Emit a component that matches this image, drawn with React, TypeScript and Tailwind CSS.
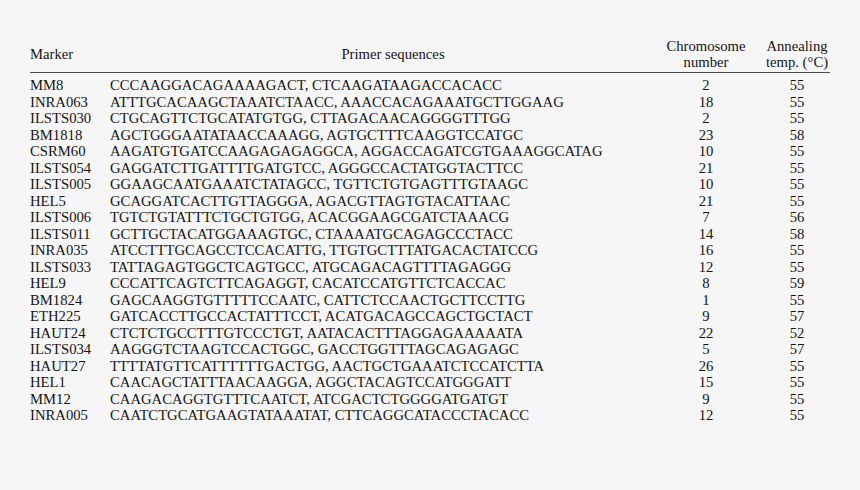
import React from 'react';

interface PrimerRow {
  marker: string;
  primers: string;
  chromosome: number;
  temp: number;
}

const rows: PrimerRow[] = [
  { marker: 'MM8', primers: 'CCCAAGGACAGAAAAGACT, CTCAAGATAAGACCACACC', chromosome: 2, temp: 55 },
  { marker: 'INRA063', primers: 'ATTTGCACAAGCTAAATCTAACC, AAACCACAGAAATGCTTGGAAG', chromosome: 18, temp: 55 },
  { marker: 'ILSTS030', primers: 'CTGCAGTTCTGCATATGTGG, CTTAGACAACAGGGGTTTGG', chromosome: 2, temp: 55 },
  { marker: 'BM1818', primers: 'AGCTGGGAATATAACCAAAGG, AGTGCTTTCAAGGTCCATGC', chromosome: 23, temp: 58 },
  { marker: 'CSRM60', primers: 'AAGATGTGATCCAAGAGAGAGGCA, AGGACCAGATCGTGAAAGGCATAG', chromosome: 10, temp: 55 },
  { marker: 'ILSTS054', primers: 'GAGGATCTTGATTTTGATGTCC, AGGGCCACTATGGTACTTCC', chromosome: 21, temp: 55 },
  { marker: 'ILSTS005', primers: 'GGAAGCAATGAAATCTATAGCC, TGTTCTGTGAGTTTGTAAGC', chromosome: 10, temp: 55 },
  { marker: 'HEL5', primers: 'GCAGGATCACTTGTTAGGGA, AGACGTTAGTGTACATTAAC', chromosome: 21, temp: 55 },
  { marker: 'ILSTS006', primers: 'TGTCTGTATTTCTGCTGTGG, ACACGGAAGCGATCTAAACG', chromosome: 7, temp: 56 },
  { marker: 'ILSTS011', primers: 'GCTTGCTACATGGAAAGTGC, CTAAAATGCAGAGCCCTACC', chromosome: 14, temp: 58 },
  { marker: 'INRA035', primers: 'ATCCTTTGCAGCCTCCACATTG, TTGTGCTTTATGACACTATCCG', chromosome: 16, temp: 55 },
  { marker: 'ILSTS033', primers: 'TATTAGAGTGGCTCAGTGCC, ATGCAGACAGTTTTAGAGGG', chromosome: 12, temp: 55 },
  { marker: 'HEL9', primers: 'CCCATTCAGTCTTCAGAGGT, CACATCCATGTTCTCACCAC', chromosome: 8, temp: 59 },
  { marker: 'BM1824', primers: 'GAGCAAGGTGTTTTTCCAATC, CATTCTCCAACTGCTTCCTTG', chromosome: 1, temp: 55 },
  { marker: 'ETH225', primers: 'GATCACCTTGCCACTATTTCCT, ACATGACAGCCAGCTGCTACT', chromosome: 9, temp: 57 },
  { marker: 'HAUT24', primers: 'CTCTCTGCCTTTGTCCCTGT, AATACACTTTAGGAGAAAAATA', chromosome: 22, temp: 52 },
  { marker: 'ILSTS034', primers: 'AAGGGTCTAAGTCCACTGGC, GACCTGGTTTAGCAGAGAGC', chromosome: 5, temp: 57 },
  { marker: 'HAUT27', primers: 'TTTTATGTTCATTTTTTGACTGG, AACTGCTGAAATCTCCATCTTA', chromosome: 26, temp: 55 },
  { marker: 'HEL1', primers: 'CAACAGCTATTTAACAAGGA, AGGCTACAGTCCATGGGATT', chromosome: 15, temp: 55 },
  { marker: 'MM12', primers: 'CAAGACAGGTGTTTCAATCT, ATCGACTCTGGGGATGATGT', chromosome: 9, temp: 55 },
  { marker: 'INRA005', primers: 'CAATCTGCATGAAGTATAAATAT, CTTCAGGCATACCCTACACC', chromosome: 12, temp: 55 },
];

const cols = 'grid grid-cols-[80px_556px_80px_84px]';

export default function App() {
  return (
    <div className="w-[860px] h-[490px] bg-[#f6f6f6] text-[#141414] font-['Liberation_Serif',serif] text-[14.7px] leading-[16.5px] pt-[38px] pl-[30px]">
      <div className="w-[800px]">
        {/* header */}
        <div className={`${cols} items-center pb-[2px] border-b-[1.5px] border-[#4a4a4a] leading-[16px]`}>
          <span>Marker</span>
          <span className="text-center pl-[10px]">Primer sequences</span>
          <span className="text-center whitespace-nowrap">
            Chromosome
            <br />
            number
          </span>
          <span className="text-center whitespace-nowrap pl-[18px]">
            Annealing
            <br />
            temp. (°C)
          </span>
        </div>

        {/* rows */}
        <div className="pt-[4px]">
          {rows.map((r) => (
            <div key={r.marker} className={cols}>
              <span>{r.marker}</span>
              <span className="whitespace-nowrap">{r.primers}</span>
              <span className="text-center">{r.chromosome}</span>
              <span className="text-center pl-[18px]">{r.temp}</span>
            </div>
          ))}
        </div>
      </div>
    </div>
  );
}
